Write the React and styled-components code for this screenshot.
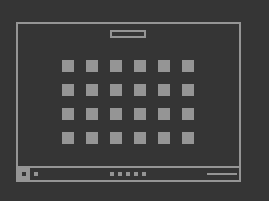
import React from 'react';
import styled, { createGlobalStyle } from 'styled-components';

const bg = '#353535';
const fg = '#959595';

const Global = createGlobalStyle`
  html, body {
    margin: 0;
    padding: 0;
    background: ${bg};
    font-family: "Liberation Sans", Arial, sans-serif;
  }
`;

const Page = styled.div`
  width: 269px;
  height: 201px;
  padding: 22px 0 0 16px;
  box-sizing: border-box;
`;

const Screen = styled.div`
  width: 225px;
  height: 160px;
  box-sizing: border-box;
  border: 2px solid ${fg};
  display: flex;
  flex-direction: column;
`;

const Desktop = styled.div`
  flex: 1;
  display: flex;
  flex-direction: column;
  align-items: center;
  padding: 6px 1px 0 0;
`;

const TitlePill = styled.div`
  width: 36px;
  height: 8px;
  box-sizing: border-box;
  border: 2px solid ${fg};
`;

const IconGrid = styled.div`
  margin-top: 22px;
  display: grid;
  grid-template-columns: repeat(6, 12px);
  grid-auto-rows: 12px;
  gap: 12px;
`;

const AppIcon = styled.div`
  background: ${fg};
`;

const Taskbar = styled.div`
  height: 12px;
  border-top: 2px solid ${fg};
  display: grid;
  grid-template-columns: 1fr auto 1fr;
  align-items: center;
  padding-right: 1px;
`;

const TaskLeft = styled.div`
  display: flex;
  align-items: center;
  gap: 4px;
  height: 100%;
`;

const StartButton = styled.div`
  width: 12px;
  height: 12px;
  background: ${fg};
  display: flex;
  align-items: center;
  justify-content: center;
  &::after {
    content: '';
    width: 4px;
    height: 4px;
    background: ${bg};
  }
`;

const Dot = styled.div`
  width: 4px;
  height: 4px;
  background: ${fg};
`;

const Dots = styled.div`
  display: flex;
  gap: 4px;
`;

const Clock = styled.div`
  justify-self: end;
  width: 30px;
  height: 2px;
  margin-right: 1px;
  background: ${fg};
`;

export default function App() {
  return (
    <>
      <Global />
      <Page>
        <Screen>
          <Desktop>
            <TitlePill />
            <IconGrid>
              {Array.from({ length: 24 }, (_, i) => (
                <AppIcon key={i} />
              ))}
            </IconGrid>
          </Desktop>
          <Taskbar>
            <TaskLeft>
              <StartButton />
              <Dot />
            </TaskLeft>
            <Dots>
              {Array.from({ length: 5 }, (_, i) => (
                <Dot key={i} />
              ))}
            </Dots>
            <Clock />
          </Taskbar>
        </Screen>
      </Page>
    </>
  );
}
